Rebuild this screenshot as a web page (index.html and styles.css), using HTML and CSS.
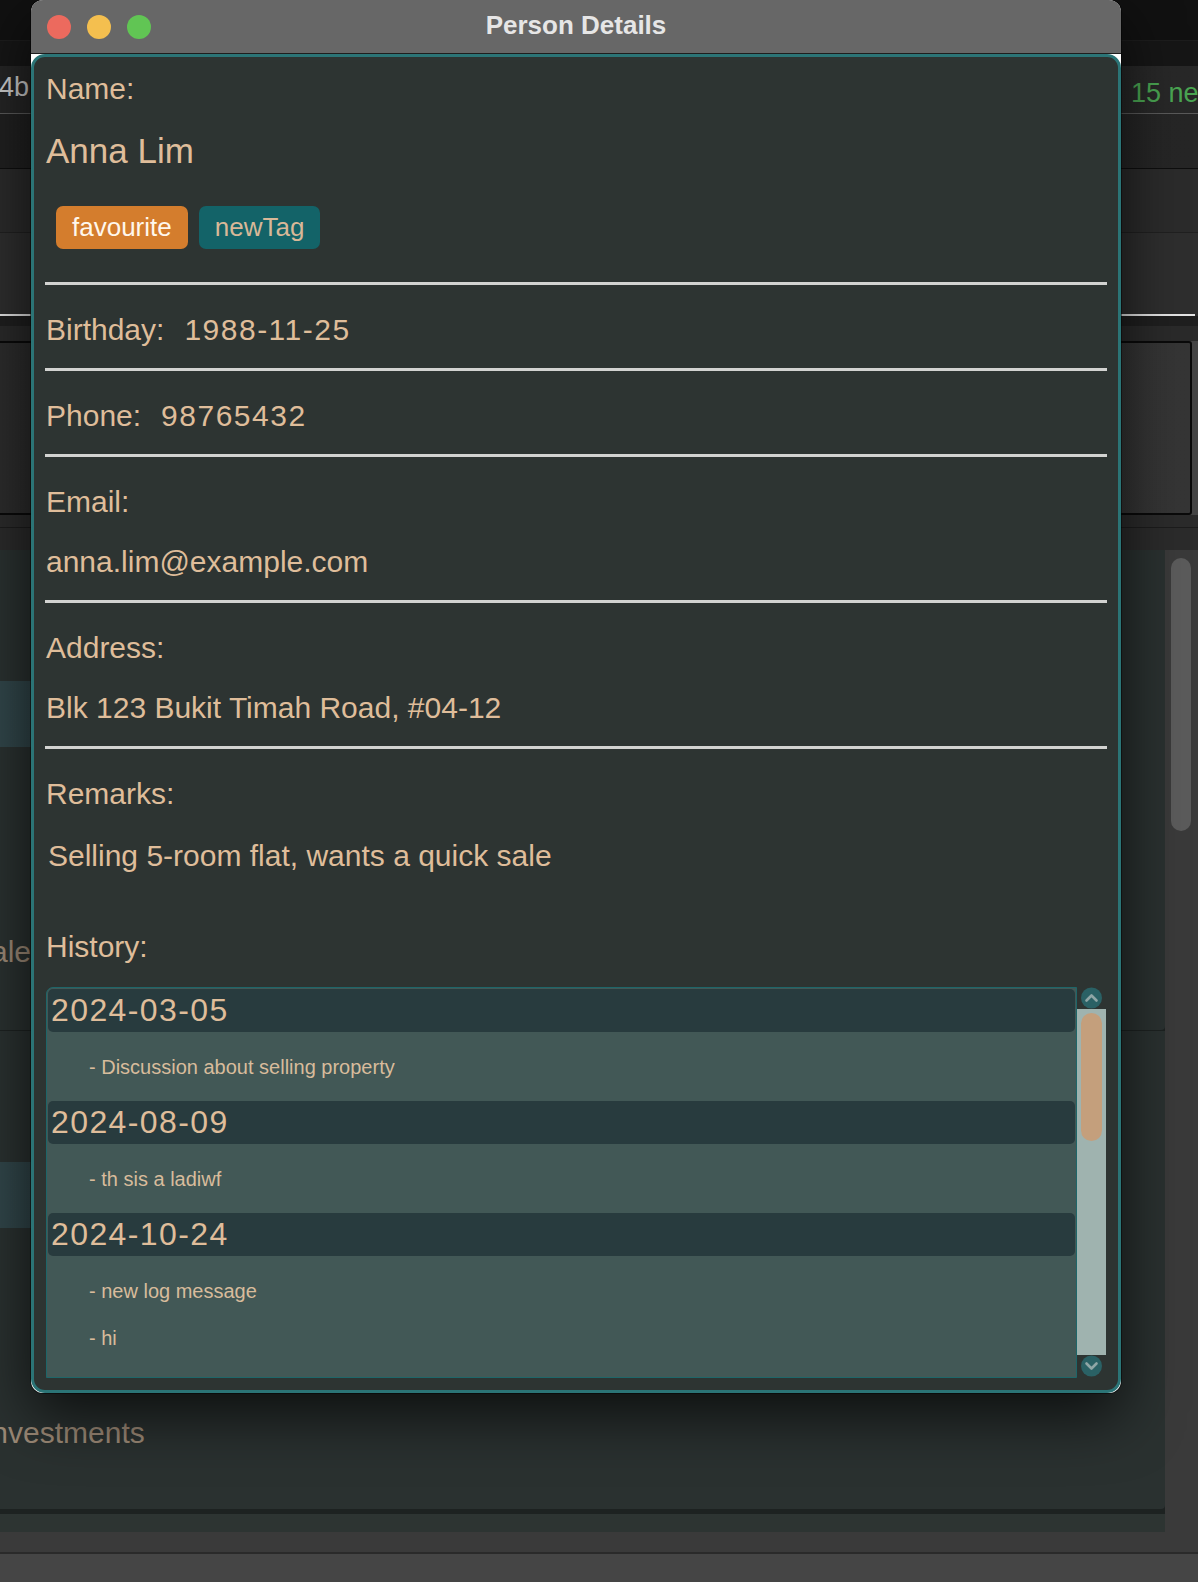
FILE: index.html
```html
<!DOCTYPE html>
<html lang="en">
<head>
<meta charset="utf-8">
<title>Person Details</title>
<link rel="stylesheet" href="styles.css">
</head>
<body>
<div class="app">
  <div class="strip strip-top"></div>
  <div class="strip strip-sub"></div>
  <div class="status">
    <span class="status-left">4b</span>
    <span class="status-right">15 new</span>
  </div>
  <div class="strip strip-a"></div>
  <div class="strip strip-b"></div>
  <div class="strip strip-c"><div class="rule"></div></div>
  <div class="strip strip-d"></div>
  <div class="box"></div>
  <div class="strip strip-e"><div class="strip-e-line"></div></div>
  <div class="main">
    <div class="main-left">
      <div class="cards">
        <div class="card">
          <div class="card-band"></div>
          <div class="card-text card-text-a">sale</div>
        </div>
        <div class="card card-second">
          <div class="card-band"></div>
          <div class="card-text card-text-b">Investments</div>
        </div>
      </div>
      <div class="strip strip-f"></div>
    </div>
    <div class="main-scroll"><div class="main-thumb"></div></div>
  </div>
  <div class="strip strip-g"></div>
  <div class="strip strip-h"></div>
</div>

<div class="window">
  <div class="titlebar">
    <div class="lights">
      <span class="light light-close"></span>
      <span class="light light-min"></span>
      <span class="light light-max"></span>
    </div>
    <div class="title">Person Details</div>
    <div class="titlebar-spacer"></div>
  </div>
  <div class="winbody">
    <div class="panel">
      <div class="field field-head">
        <div class="label">Name:</div>
        <div class="name">Anna Lim</div>
        <div class="tags">
          <span class="tag tag-fav">favourite</span>
          <span class="tag tag-new">newTag</span>
        </div>
      </div>
      <div class="sep"></div>
      <div class="field">
        <div class="pair"><span class="label">Birthday:</span><span class="value num">1988-11-25</span></div>
      </div>
      <div class="sep"></div>
      <div class="field">
        <div class="pair"><span class="label">Phone:</span><span class="value num">98765432</span></div>
      </div>
      <div class="sep"></div>
      <div class="field">
        <div class="label">Email:</div>
        <div class="value value-block">anna.lim@example.com</div>
      </div>
      <div class="sep"></div>
      <div class="field">
        <div class="label">Address:</div>
        <div class="value value-block">Blk 123 Bukit Timah Road, #04-12</div>
      </div>
      <div class="sep"></div>
      <div class="field field-last">
        <div class="label">Remarks:</div>
        <div class="value remarks">Selling 5-room flat, wants a quick sale</div>
        <div class="label history-label">History:</div>
        <div class="history">
          <div class="history-list">
            <div class="entry">
              <div class="entry-date">2024-03-05</div>
              <div class="entry-logs">
                <div class="log">- Discussion about selling property</div>
              </div>
            </div>
            <div class="entry">
              <div class="entry-date">2024-08-09</div>
              <div class="entry-logs">
                <div class="log">- th sis a ladiwf</div>
              </div>
            </div>
            <div class="entry">
              <div class="entry-date">2024-10-24</div>
              <div class="entry-logs">
                <div class="log">- new log message</div>
                <div class="log">- hi</div>
              </div>
            </div>
          </div>
          <div class="vbar">
            <svg class="vbar-btn vbar-up" width="29" height="22" viewBox="0 0 29 22"><circle cx="14.5" cy="11" r="10.5" fill="#2a6165"/><path d="M9.5 13.5 L14.5 8.5 L19.5 13.5" fill="none" stroke="#8fa6a6" stroke-width="2.6" stroke-linecap="round" stroke-linejoin="round"/></svg>
            <div class="vbar-track"><div class="vbar-thumb"></div></div>
            <svg class="vbar-btn vbar-down" width="29" height="23" viewBox="0 0 29 23"><circle cx="14.5" cy="11" r="10.5" fill="#2a6165"/><path d="M9.5 8.5 L14.5 13.5 L19.5 8.5" fill="none" stroke="#8fa6a6" stroke-width="2.6" stroke-linecap="round" stroke-linejoin="round"/></svg>
          </div>
        </div>
      </div>
    </div>
  </div>
</div>
</body>
</html>
```

FILE: styles.css
```css
* { box-sizing: border-box; margin: 0; padding: 0; }

html, body {
  width: 1198px;
  height: 1582px;
  overflow: hidden;
}

body {
  background: #454545;
  font-family: "Liberation Sans", Arial, sans-serif;
  position: relative;
}

/* ---------- background application ---------- */
.app {
  display: flex;
  flex-direction: column;
  width: 1198px;
}

.strip { flex: none; }
.strip-top { height: 40px; background: #111111; }
.strip-sub { height: 26px; background: #161616; border-top: 1px solid #1d1d1d; }

.status {
  height: 48px;
  background: linear-gradient(to right, #252525, #282828);
  border-bottom: 1px solid #5a5a5a;
  display: grid;
  grid-template-columns: 1131px 1fr;
  align-items: start;
  font-size: 27px;
  line-height: 31px;
  white-space: nowrap;
  overflow: hidden;
}
.status-left { color: #cdcdcd; margin-top: 6px; margin-left: -1px; }
.status-right { color: #4aa552; margin-top: 12px; }

.strip-a { height: 55px; background: linear-gradient(to right, #202020, #262626); border-bottom: 1px solid #0e0e0e; }
.strip-b { height: 64px; background: #2b2b2b; border-bottom: 1px solid #202020; }
.strip-c {
  height: 83px;
  background: #2e2e2e;
  display: flex;
  flex-direction: column;
  justify-content: flex-end;
  padding-right: 3px;
}
.rule { height: 2px; background: #e4e4e4; }
.strip-d { height: 25px; background: linear-gradient(#1f1f1f 0 10px, #2a2a2a 10px); }

.box {
  flex: none;
  height: 174px;
  margin: 0 6px 0 -4px;
  border: 2px solid #0a0a0a;
  border-radius: 3px;
  background: linear-gradient(to right, #2c2c2c, #353535);
}

.strip-e { height: 35px; background: #2b2b2b; padding-top: 12px; }
.strip-e-line { height: 1px; background: #1c1c1c; }

.main {
  flex: none;
  height: 982px;
  display: flex;
}
.main-left {
  width: 1165px;
  display: flex;
  flex-direction: column;
}
.cards {
  height: 964px;
  background: #1d2221;
  display: flex;
  flex-direction: column;
  gap: 1px;
  padding-bottom: 5px;
}
.card {
  height: 480px;
  background: #2a3130;
  border-radius: 0 0 4px 0;
  padding-top: 131px;
  overflow: hidden;
}
.card-second { height: 478px; }
.card-band {
  width: 600px;
  height: 66px;
  background: linear-gradient(to right, #31464a, #374e4d);
}
.card-text {
  margin-top: 185px;
  font-size: 30px;
  line-height: 40px;
  color: #9d8a77;
  white-space: nowrap;
}
.card-text-a { margin-left: -24px; }
.card-text-b { margin-left: -17px; }
.strip-f { height: 18px; background: #2d3432; }

.main-scroll {
  width: 33px;
  background: #3a3a3a;
  padding: 8px 0 0 6px;
}
.main-thumb {
  width: 20px;
  height: 273px;
  border-radius: 10px;
  background: #5b5b5b;
}

.strip-g { height: 20px; background: #3a3a3a; }
.strip-h { height: 2px; background: #2a2a2a; }

/* ---------- Person Details window ---------- */
.window {
  position: absolute;
  left: 31px;
  top: 0;
  width: 1090px;
  height: 1393px;
  border-radius: 12px;
  overflow: hidden;
  display: flex;
  flex-direction: column;
  background: #ffffff;
  box-shadow: 0 22px 60px rgba(0, 0, 0, 0.7), 0 0 0 1px rgba(0, 0, 0, 0.45);
}

.titlebar {
  flex: none;
  height: 54px;
  background: #676767;
  border-bottom: 1px solid #1e1e1e;
  display: grid;
  grid-template-columns: 1fr auto 1fr;
  align-items: center;
}
.lights { display: flex; gap: 16px; padding-left: 16px; }
.light { width: 24px; height: 24px; border-radius: 50%; }
.light-close { background: #ec6a5e; }
.light-min { background: #f4bf4f; }
.light-max { background: #61c554; }
.title {
  font-weight: 700;
  font-size: 26px;
  line-height: 30px;
  color: #e6e6e6;
  padding-bottom: 3px;
}

.winbody { flex: 1; display: flex; }

.panel {
  flex: 1;
  display: flex;
  flex-direction: column;
  background: #2d3432;
  border: 3px solid #2b7476;
  border-radius: 14px;
  padding: 0 11px;
  color: #dfbd9a;
  font-size: 30px;
}

.field { padding: 25px 1px 18px; }
.field-head { padding: 12px 1px 33px; }
.field-last { padding-bottom: 0; flex: 1; }

.label, .value { line-height: 40px; white-space: nowrap; }
.pair { display: flex; gap: 20px; }
.num { letter-spacing: 1.5px; }
.value-block { margin-top: 20px; }
.remarks { margin-top: 22px; padding-left: 2px; }
.history-label { margin-top: 51px; }

.name {
  margin-top: 19px;
  font-size: 35px;
  line-height: 46px;
}

.tags {
  display: flex;
  gap: 11px;
  margin-top: 32px;
  margin-left: 10px;
}
.tag {
  height: 43px;
  line-height: 43px;
  padding: 0 16px;
  border-radius: 7px;
  font-size: 26px;
}
.tag-fav { background: #d47d2d; color: #fff7ec; }
.tag-new { background: #136368; color: #d8b898; }

.sep {
  flex: none;
  height: 3px;
  background: #d2d3d1;
}

/* history list */
.history {
  margin-top: 20px;
  height: 391px;
  display: flex;
}
.history-list {
  flex: 1;
  border: 1px solid #1e6669;
  border-radius: 7px 0 0 0;
  background: #425856;
  padding-top: 1px;
  overflow: hidden;
}
.entry-date {
  margin: 0 1px;
  height: 43px;
  line-height: 43px;
  padding-left: 3px;
  font-size: 32px;
  letter-spacing: 1.4px;
  background: #283b3e;
  border-radius: 5px;
  color: #dfbd9a;
}
.entry-logs {
  padding: 12px 0 10px 42px;
}
.log {
  font-size: 20px;
  line-height: 47px;
  color: #d8bc9c;
}

.vbar {
  width: 29px;
  display: flex;
  flex-direction: column;
}
.vbar-btn { display: block; flex: none; }
.vbar-track {
  flex: 1;
  background: #9fb3af;
  padding: 4px;
}
.vbar-thumb {
  height: 128px;
  border-radius: 11px;
  background: #c49f7c;
}
```
